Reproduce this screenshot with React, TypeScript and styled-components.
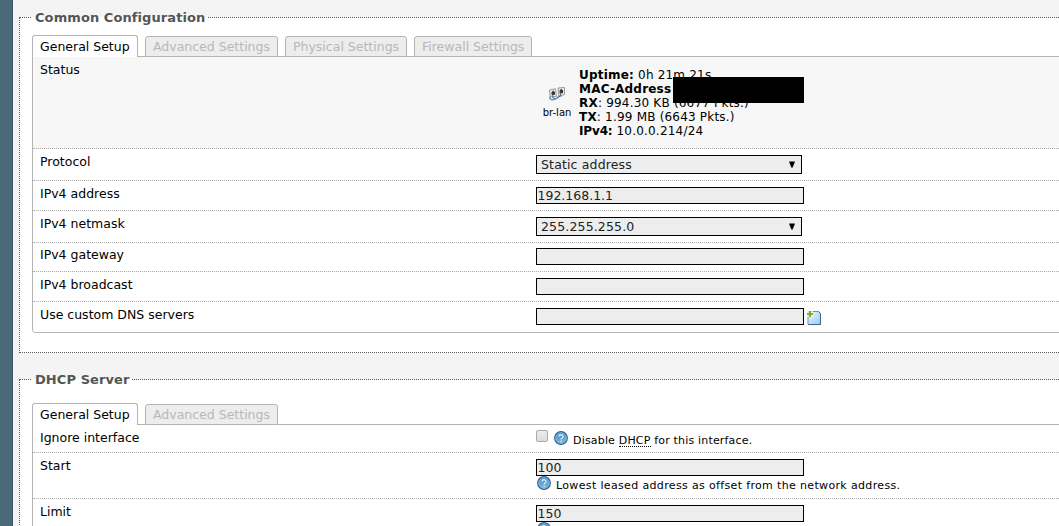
import React from "react";
import styled, { createGlobalStyle } from "styled-components";

const GlobalStyle = createGlobalStyle`
  * { box-sizing: border-box; }
  body {
    margin: 0;
    background: #f4f4f4;
    color: #000;
    font: 12.5px/14px "DejaVu Sans", sans-serif;
    overflow: hidden;
  }
`;

const Page = styled.div`
  display: flex;
  height: 526px;
  overflow: hidden;
`;

const SideStrip = styled.div`
  flex: none;
  width: 13px;
  background: #4b6a79;
  border-right: 1px solid #3c5462;
`;

const Content = styled.main`
  flex: 1;
  min-width: 0;
  padding: 11px 0 0 6px;
`;

const Section = styled.fieldset<{ $height: number }>`
  display: block;
  width: 1060px;
  height: ${(p) => p.$height}px;
  margin: 0 0 20px;
  padding: 0 12px;
  min-width: 0;
  background: #fff;
  border: 1px dotted #555;
`;

const Legend = styled.legend`
  height: 13px;
  margin: 0;
  padding: 0 3px;
  font-size: 13px;
  line-height: 13px;
  font-weight: bold;
  letter-spacing: 0.08px;
  color: #555;
  white-space: nowrap;
`;

const Tabs = styled.div<{ $gap: number }>`
  display: flex;
  align-items: flex-end;
  gap: 7px;
  height: 22px;
  margin-top: ${(p) => p.$gap}px;
  position: relative;
  z-index: 1;
`;

const Tab = styled.div<{ $active?: boolean; $width: number }>`
  width: ${(p) => p.$width}px;
  height: ${(p) => (p.$active ? 22 : 21)}px;
  padding: ${(p) => (p.$active ? 4 : 3)}px 0 0 7px;
  border: 1px solid #b4b4b4;
  border-bottom-color: ${(p) => (p.$active ? "transparent" : "#b4b4b4")};
  border-bottom-width: ${(p) => (p.$active ? 0 : 1)}px;
  border-radius: 3px 3px 0 0;
  background: ${(p) => (p.$active ? "#fff" : "#ededed")};
  color: ${(p) => (p.$active ? "#000" : "#b8b8b8")};
  white-space: nowrap;
`;

const Panel = styled.div`
  margin-top: -1px;
  border: 1px solid #b4b4b4;
  border-radius: 0 0 3px 3px;
`;

const Row = styled.div<{ $height: number; $pad?: number; $shade?: boolean }>`
  display: flex;
  height: ${(p) => p.$height}px;
  padding: ${(p) => p.$pad ?? 6}px 0 0 7px;
  background: ${(p) => (p.$shade ? "#f7f7f7" : "#fff")};
  border-bottom: 1px dotted #aaa;
  &:last-child { border-bottom: 0; border-radius: 0 0 3px 3px; }
`;

const Label = styled.label`
  flex: none;
  width: 496px;
  white-space: nowrap;
`;

const Field = styled.div`
  flex: 1;
  min-width: 0;
`;

const Line = styled.div<{ $indent?: number }>`
  display: flex;
  align-items: flex-start;
  padding-left: ${(p) => p.$indent ?? 0}px;
`;

const Input = styled.div`
  width: 268px;
  height: 17px;
  padding: 0 0 0 0.5px;
  border: 1px solid #000;
  background: #ededed;
  color: #222;
  line-height: 15px;
`;

const Select = styled.div`
  display: flex;
  justify-content: space-between;
  width: 266px;
  height: 19px;
  padding: 0 6px 0 4px;
  border: 1px solid #000;
  background: #ededed;
  color: #222;
  line-height: 17px;
  letter-spacing: 0.15px;
`;

const Arrow = styled.svg`
  margin-top: 5px;
`;

const StatusBox = styled.div`
  display: flex;
  padding-top: 5px;
  position: relative;
`;

const Device = styled.div`
  display: flex;
  flex-direction: column;
  align-items: center;
  width: 28px;
  margin: 19px 8px 0 7px;
  font-size: 10px;
  line-height: 12px;
  white-space: nowrap;
  svg { margin-bottom: 6px; flex: none; }
`;

const Stats = styled.div`
  white-space: nowrap;
  font-size: 12px;
  letter-spacing: 0.2px;
`;

const TightBold = styled.b`
  letter-spacing: -0.15px;
`;

const Redaction = styled.div`
  position: absolute;
  left: 137px;
  top: 14px;
  width: 131px;
  height: 26px;
  background: #000;
`;

const AddButton = styled.span`
  margin: 2px 0 0 2.5px;
  height: 16px;
  svg { display: block; }
`;

const Checkbox = styled.span`
  width: 12px;
  height: 12px;
  margin: -1px 6px 0 0;
  border: 1px solid #aaa;
  border-radius: 2px;
  background: linear-gradient(#ececec, #dcdcdc);
`;

const HelpText = styled.span<{ $spacing?: number }>`
  margin: 3px 0 0 5px;
  font-size: 11px;
  line-height: 14px;
  letter-spacing: ${(p) => p.$spacing ?? 0.35}px;
  white-space: nowrap;
`;

const Abbr = styled.span`
  display: inline-block;
  height: 13px;
  line-height: 14px;
  border-bottom: 1px dotted #000;
`;

const HelpIcon = () => (
  <svg width="14" height="14" viewBox="0 0 14 14">
    <defs>
      <linearGradient id="help" x1="0" y1="0" x2="0" y2="1">
        <stop offset="0" stopColor="#4589bd" />
        <stop offset="1" stopColor="#7fbbe6" />
      </linearGradient>
    </defs>
    <circle cx="7" cy="7" r="6.3" fill="url(#help)" stroke="#2c5f8c" strokeWidth="1.2" />
    <circle cx="7" cy="7" r="5.3" fill="none" stroke="#8fc1e4" strokeWidth="0.7" />
    <path d="M4.9 5.5C5 3.1 9.2 3.2 9.1 5.6C9 7 7.1 6.9 7.1 8.5M7.1 9.6V11" fill="none" stroke="#d8edfb" strokeWidth="1.3" />
  </svg>
);

const AddIcon = () => (
  <svg width="15" height="16" viewBox="0 0 15 16">
    <defs>
      <linearGradient id="page" x1="0" y1="0" x2="1" y2="1">
        <stop offset="0" stopColor="#f0f8ff" />
        <stop offset="1" stopColor="#9bc9f5" />
      </linearGradient>
    </defs>
    <path d="M1 1.5H11.5L13.5 3.5V14.5H1Z" fill="url(#page)" stroke="#6e8fc0" />
    <path d="M11.5 1.5L13.5 3.8V14.5H1.5" fill="none" stroke="#3d6290" />
    <path d="M0 0H6V7H0Z" fill="#fff" opacity="0.7" />
    <path d="M3 1V7M0 4H6" stroke="#7fac25" strokeWidth="2.1" />
  </svg>
);

const BridgeIcon = () => (
  <svg width="16" height="14" viewBox="0 0 16 14">
    <path d="M2 9C-1 11 2 14 6 12C10 11 9 8 13 9" fill="none" stroke="#658fb8" strokeWidth="1.4" />
    <g stroke="#858585" strokeWidth="0.8" fill="#ecece7">
      <path d="M0.5 3L6.5 1.8L7.4 9.5L1.2 10Z" />
      <path d="M9 1L15.5 0.5V7.5L9.8 9Z" />
    </g>
    <path d="M2.4 5H3.3V4L5 3.8V4.8L5.9 4.7L6 7.8L2.7 8.2Z" fill="#333" />
    <path d="M10.5 3.3H11.4V2.3L13 2.1V3L14 2.9V6L10.7 6.4Z" fill="#333" />
    <path d="M3.7 7V10.5L6 11.6M12 5.5L11.3 9L8.7 10.5" fill="none" stroke="#456f9b" />
  </svg>
);

const SelectBox = ({ value }: { value: string }) => (
  <Select>
    <span>{value}</span>
    <Arrow width="6" height="7" viewBox="0 0 6 7">
      <path d="M0 0.5H6L3.7 6.5H2.3Z" fill="#000" />
    </Arrow>
  </Select>
);

export default function App() {
  return (
    <>
      <GlobalStyle />
      <Page>
        <SideStrip />
        <Content>
          <Section $height={342}>
            <Legend>Common Configuration</Legend>
            <Tabs $gap={11}>
              <Tab $active $width={106}>General Setup</Tab>
              <Tab $width={133}>Advanced Settings</Tab>
              <Tab $width={122}>Physical Settings</Tab>
              <Tab $width={118}>Firewall Settings</Tab>
            </Tabs>
            <Panel>
              <Row $height={92} $shade>
                <Label>Status</Label>
                <Field>
                  <StatusBox>
                    <Device>
                      <BridgeIcon />
                      br-lan
                    </Device>
                    <Stats>
                      <b>Uptime:</b> 0h 21m 21s<br />
                      <b>MAC-Address</b><br />
                      <b>RX</b>: 994.30 KB (6677 Pkts.)<br />
                      <b>TX</b>: 1.99 MB (6643 Pkts.)<br />
                      <TightBold>IPv4:</TightBold> 10.0.0.214/24
                    </Stats>
                    <Redaction />
                  </StatusBox>
                </Field>
              </Row>
              <Row $height={32}>
                <Label>Protocol</Label>
                <Field><SelectBox value="Static address" /></Field>
              </Row>
              <Row $height={30}>
                <Label>IPv4 address</Label>
                <Field><Input>192.168.1.1</Input></Field>
              </Row>
              <Row $height={32}>
                <Label>IPv4 netmask</Label>
                <Field><SelectBox value="255.255.255.0" /></Field>
              </Row>
              <Row $height={29} $pad={5}>
                <Label>IPv4 gateway</Label>
                <Field><Input /></Field>
              </Row>
              <Row $height={30}>
                <Label>IPv4 broadcast</Label>
                <Field><Input /></Field>
              </Row>
              <Row $height={30}>
                <Label>Use custom DNS servers</Label>
                <Field>
                  <Line>
                    <Input />
                    <AddButton><AddIcon /></AddButton>
                  </Line>
                </Field>
              </Row>
            </Panel>
          </Section>
          <Section $height={300}>
            <Legend>DHCP Server</Legend>
            <Tabs $gap={17}>
              <Tab $active $width={106}>General Setup</Tab>
              <Tab $width={133}>Advanced Settings</Tab>
            </Tabs>
            <Panel>
              <Row $height={28}>
                <Label>Ignore interface</Label>
                <Field>
                  <Line>
                    <Checkbox />
                    <HelpIcon />
                    <HelpText $spacing={0.18}>Disable <Abbr>DHCP</Abbr> for this interface.</HelpText>
                  </Line>
                </Field>
              </Row>
              <Row $height={46}>
                <Label>Start</Label>
                <Field>
                  <Input>100</Input>
                  <Line $indent={1}>
                    <HelpIcon />
                    <HelpText>Lowest leased address as offset from the network address.</HelpText>
                  </Line>
                </Field>
              </Row>
              <Row $height={46}>
                <Label>Limit</Label>
                <Field>
                  <Input>150</Input>
                  <Line $indent={1}>
                    <HelpIcon />
                  </Line>
                </Field>
              </Row>
            </Panel>
          </Section>
        </Content>
      </Page>
    </>
  );
}
